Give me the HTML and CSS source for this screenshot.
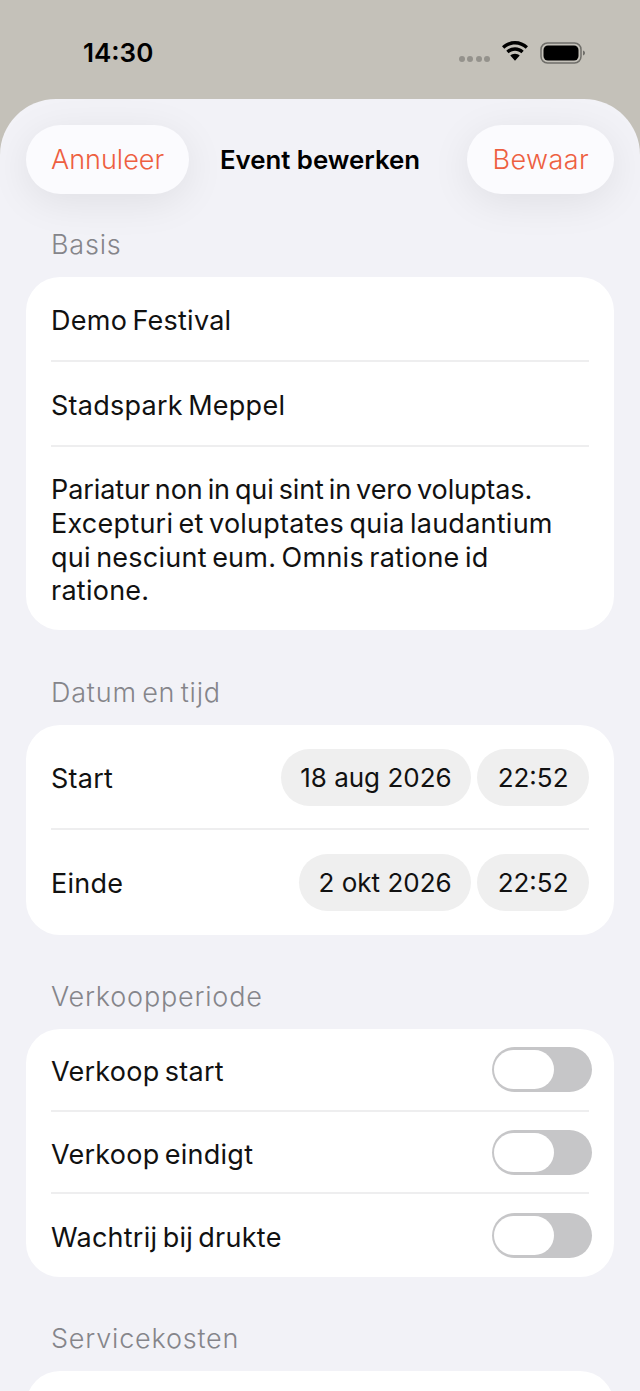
FILE: index.html
```
<!DOCTYPE html>
<html lang="nl">
<head>
<meta charset="utf-8">
<title>Event bewerken</title>
<link rel="stylesheet" href="styles.css">
</head>
<body>
<div class="status">
  <span class="clock">14:30</span>
  <div class="status-icons">
    <div class="dots"><i></i><i></i><i></i><i></i></div>
    <svg class="wifi" width="28" height="22" viewBox="0 0 28 22"><path d="M14 3.500c4.100 0 7.900 1.600 10.700 4.300l2.300-2.500C23.500 2 19 0 14 0S4.500 2 1 5.300l2.300 2.500C6.100 5.100 9.900 3.500 14 3.500z"/><path d="M14 9.800c2.500 0 4.700 1 6.400 2.500l2.300-2.500C20.400 7.600 17.400 6.300 14 6.300s-6.400 1.300-8.700 3.500l2.300 2.500c1.700-1.500 3.900-2.500 6.400-2.500z"/><path d="M14 12.800c-1.900 0-3.500.7-4.700 1.800L14 19.800l4.700-5.200c-1.200-1.100-2.800-1.800-4.700-1.800z"/></svg>
    <svg class="battery" width="46" height="24" viewBox="0 0 46 24"><rect x="1" y="2" width="40" height="20" rx="6.500" fill="none" stroke="#6f6e69" stroke-width="1.500"/><rect x="3.500" y="4.500" width="35" height="15" rx="4.500" fill="#000"/><path d="M43 9.500c1.300.4 2 1.300 2 2.500s-.7 2.100-2 2.500z" fill="#6f6e69"/></svg>
  </div>
</div>
<main class="sheet">
  <header class="nav">
    <div class="nav-side"><button class="nav-btn">Annuleer</button></div>
    <h1 class="nav-title">Event bewerken</h1>
    <div class="nav-side nav-side-end"><button class="nav-btn nav-btn-wide">Bewaar</button></div>
  </header>

  <section class="group group-first">
    <h2 class="label">Basis</h2>
    <div class="card">
      <div class="row-text">Demo Festival</div>
      <div class="row-text">Stadspark Meppel</div>
      <div class="row-multi"><span class="line-tight">Pariatur non in qui sint in vero voluptas.</span><br><span class="line-loose">Excepturi et voluptates quia laudantium</span><br>qui nesciunt eum. Omnis ratione id<br>ratione.</div>
    </div>
  </section>

  <section class="group">
    <h2 class="label">Datum en tijd</h2>
    <div class="card">
      <div class="row-date">
        <span class="row-name">Start</span>
        <div class="pills"><span class="pill">18 aug 2026</span><span class="pill">22:52</span></div>
      </div>
      <div class="row-date">
        <span class="row-name">Einde</span>
        <div class="pills"><span class="pill">2 okt 2026</span><span class="pill">22:52</span></div>
      </div>
    </div>
  </section>

  <section class="group">
    <h2 class="label">Verkoopperiode</h2>
    <div class="card">
      <div class="row-toggle"><span class="row-name">Verkoop start</span><span class="toggle"><i></i></span></div>
      <div class="row-toggle"><span class="row-name">Verkoop eindigt</span><span class="toggle"><i></i></span></div>
      <div class="row-toggle"><span class="row-name">Wachtrij bij drukte</span><span class="toggle"><i></i></span></div>
    </div>
  </section>

  <section class="group">
    <h2 class="label">Servicekosten</h2>
    <div class="card card-cut"></div>
  </section>
</main>
</body>
</html>
```
FILE: styles.css
```
* { box-sizing: border-box; }
html, body { margin: 0; height: 100%; }
body {
  width: 640px;
  height: 1391px;
  overflow: hidden;
  background: #c4c1b9;
  font-family: Inter, "Noto Sans", sans-serif;
  color: #111;
}
.status {
  height: 99px;
  display: flex;
  align-items: center;
  justify-content: space-between;
  padding: 6px 54px 0 83px;
}
.clock {
  font-size: 26px;
  font-weight: 600;
  color: #000;
}
.status-icons { display: flex; align-items: center; }
.dots { display: flex; gap: 2.300px; margin-top: 13px; margin-right: 11px; }
.dots i { width: 6px; height: 6px; border-radius: 50%; background: #94928c; }
.wifi { display: block; margin-right: 11px; margin-top: -1px; }
.battery { display: block; }
.sheet {
  height: 1292px;
  background: #f2f2f7;
  border-radius: 56px 56px 0 0;
  padding: 25.500px 26px 0;
  overflow: hidden;
}
.nav { display: grid; grid-template-columns: 1fr auto 1fr; align-items: center; height: 69px; }
.nav-side { display: flex; }
.nav-side-end { justify-content: flex-end; }
.nav-btn {
  height: 69px;
  padding: 0 25px;
  border: 0;
  border-radius: 34.500px;
  background: #fbfbfe;
  color: #ee5f41;
  font: 300 27px Inter, sans-serif;
  box-shadow: 0 8px 40px rgba(0,0,0,.08);
}
.nav-btn-wide { padding-left: 26px; letter-spacing: .4px; }
.nav-title { margin: 0; font-size: 25.800px; font-weight: 600; color: #000; }
.group { margin-top: 45.500px; }
.group-first { margin-top: 34.500px; }
.label {
  margin: 0 0 16px 25px;
  font-size: 27px;
  line-height: 33px;
  font-weight: 300;
  letter-spacing: .8px;
  word-spacing: -3px;
  color: #85858a;
}
.card {
  background: #fff;
  border-radius: 34px;
  padding: 0 25px;
  font-size: 27px;
  letter-spacing: .25px;
  word-spacing: -2.500px;
  color: #111;
}
.row-text {
  height: 85px;
  display: flex;
  align-items: center;
  padding-top: 4px;
  border-bottom: 2px solid #eeeeef;
}
.row-multi { padding: 26px 0 22px; line-height: 33.800px; }
.line-tight { letter-spacing: -.1px; }
.line-loose { letter-spacing: .25px; }
.row-date {
  height: 105px;
  display: flex;
  align-items: center;
  justify-content: space-between;
  padding-top: 2px;
  border-bottom: 2px solid #eeeeef;
}
.row-date:last-child { padding-top: 0; border: 0; }
.row-date:last-child .row-name { padding-top: 3px; }
.row-name { padding-top: 2px; }
.row-toggle .row-name { padding-top: 4px; }
.pills { display: flex; gap: 6px; }
.pill {
  height: 57px;
  padding: 0 19.500px;
  border-radius: 28.500px;
  background: #efefef;
  display: flex;
  align-items: center;
  font-size: 26px;
  letter-spacing: 0;
  word-spacing: 0;
}
.pill:last-child { padding: 0 20.500px; }
.row-toggle {
  height: 82.500px;
  display: flex;
  align-items: center;
  justify-content: space-between;
  padding-top: 1px;
  border-bottom: 2px solid #eeeeef;
}
.row-toggle:last-child { border: 0; }
.toggle {
  display: block;
  width: 100px;
  height: 45px;
  margin-right: -3px;
  padding: 3px 2px;
  border-radius: 22.500px;
  background: #c6c6c8;
}
.toggle i { display: block; width: 60px; height: 39px; border-radius: 19.500px; background: #fff; }
.card-cut { height: 80px; }
```
